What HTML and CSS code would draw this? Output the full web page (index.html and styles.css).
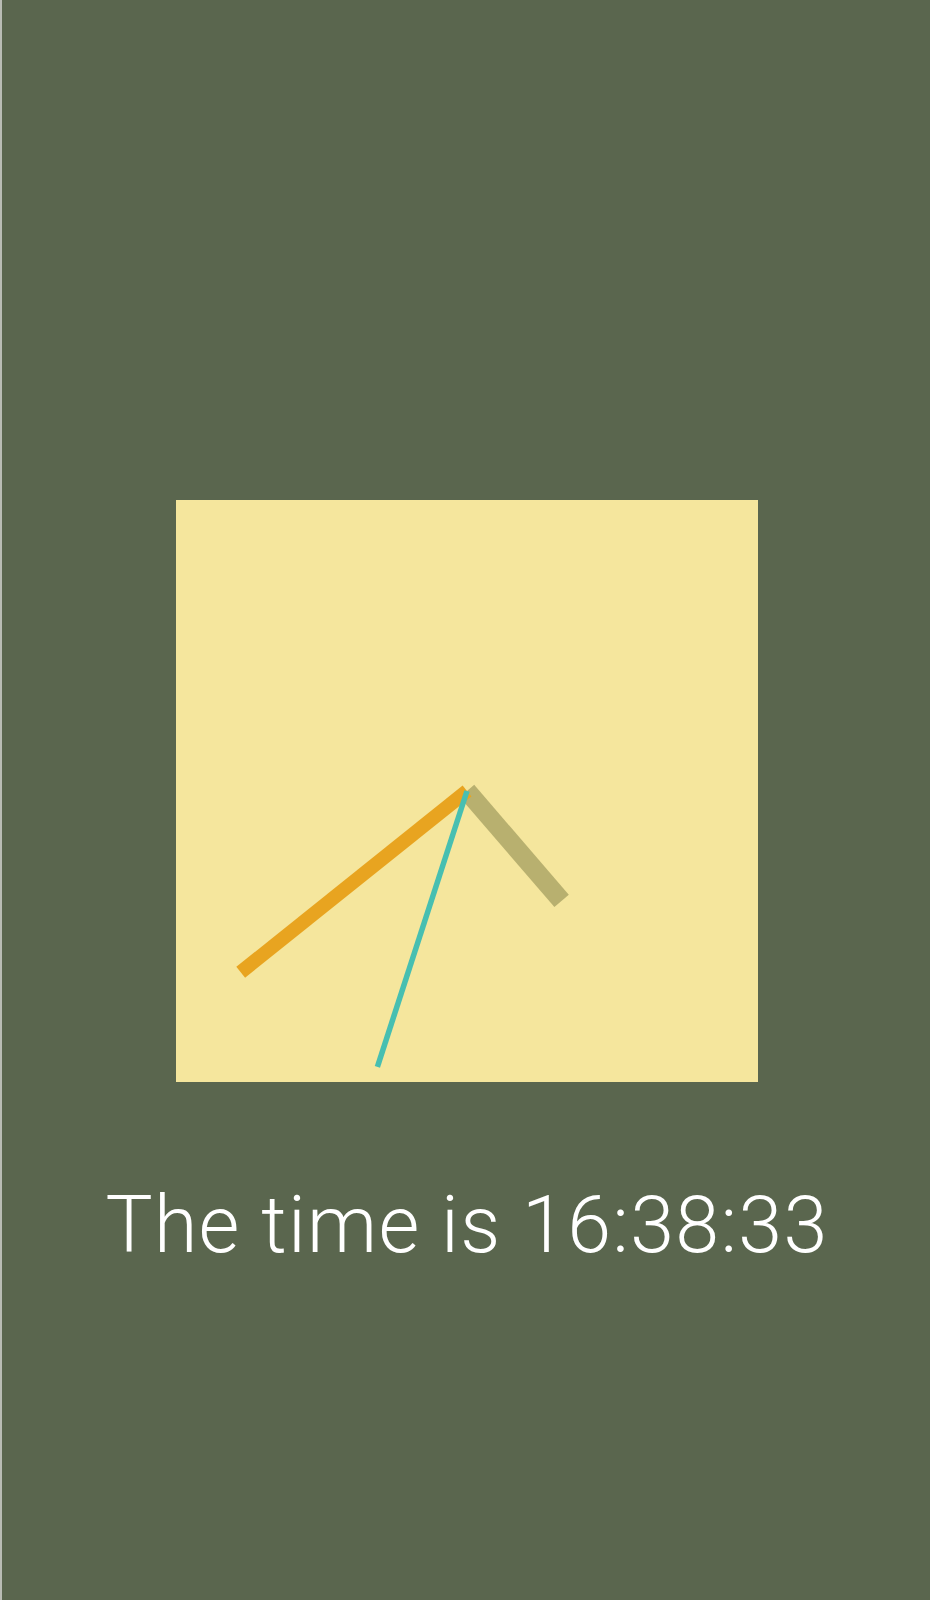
FILE: index.html
```html
<!DOCTYPE html>
<html lang="en">
<head>
<meta charset="utf-8">
<title>Clock</title>
<link rel="stylesheet" href="styles.css">
</head>
<body>
<div class="edge"></div>
<main class="page">
  <div class="clock">
    <svg class="face" width="582" height="582" viewBox="0 0 582 582" aria-hidden="true">
      <line class="hand hour" x1="291" y1="291" x2="385.6" y2="400.9"/>
      <line class="hand minute" x1="291" y1="291" x2="64.7" y2="472.3"/>
      <line class="hand second" x1="291" y1="291" x2="201.4" y2="566.8"/>
    </svg>
  </div>
  <p class="caption">The time is 16:38:33</p>
</main>
</body>
</html>
```
FILE: styles.css
```css
html, body {
  margin: 0;
  padding: 0;
  background: #5a664e;
  height: 100%;
}

body {
  position: relative;
  font-family: Roboto, "Liberation Sans", Arial, sans-serif;
}

.edge {
  position: absolute;
  left: 0;
  top: 0;
  bottom: 0;
  width: 2px;
  background: #b9bcb4;
}

.page {
  display: flex;
  flex-direction: column;
  align-items: center;
  padding-left: 4px;
}

.clock {
  margin-top: 500px;
  width: 582px;
  height: 582px;
  background: #f5e69d;
}

.face {
  display: block;
}

.hand {
  stroke-linecap: butt;
}

.hour {
  stroke: #b8b06f;
  stroke-width: 19;
}

.minute {
  stroke: #e8a420;
  stroke-width: 14;
}

.second {
  stroke: #47bfb1;
  stroke-width: 5.5;
}

.caption {
  margin: 104px 0 0;
  color: #ffffff;
  font-size: 79px;
  line-height: 1;
  letter-spacing: 1.3px;
  font-weight: 300;
}
```
